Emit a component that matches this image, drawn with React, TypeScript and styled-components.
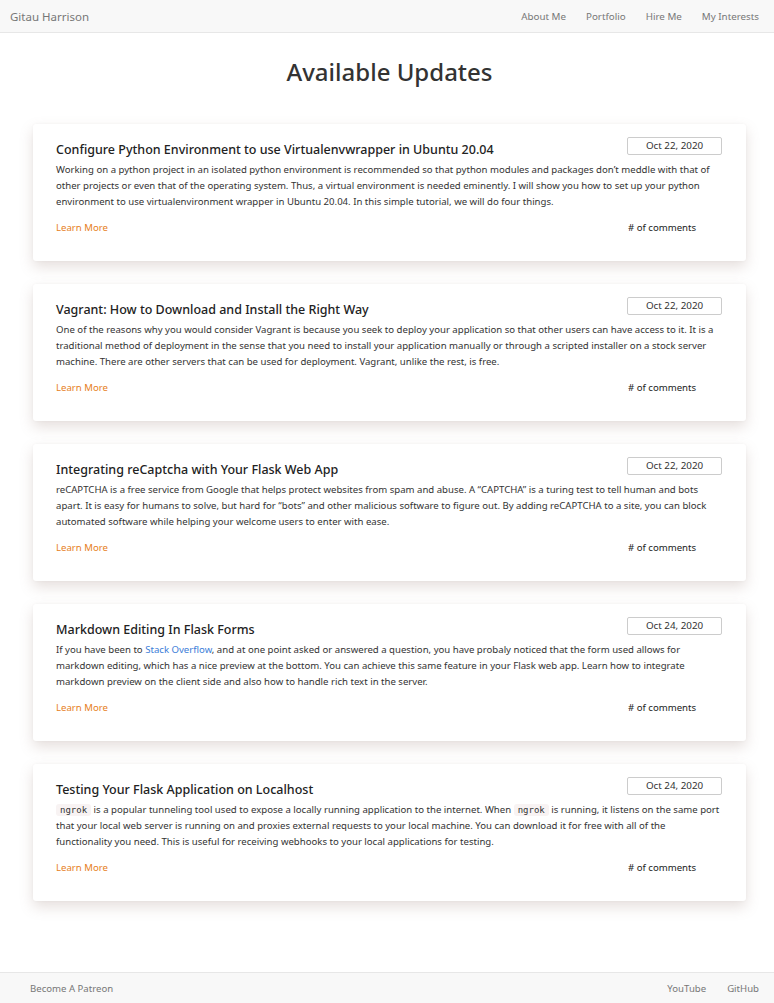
import React from "react";
import styled, { createGlobalStyle } from "styled-components";

const Global = createGlobalStyle`
  html, body { margin: 0; padding: 0; background: #fff; }
  body { font-family: "Noto Sans", "Open Sans", sans-serif; color: #333; }
  * { box-sizing: border-box; }
`;

const Page = styled.div`
  min-height: 100vh;
  display: flex;
  flex-direction: column;
`;

const NavBar = styled.header`
  height: 33px;
  background: #f8f8f8;
  border-bottom: 1px solid #e7e7e7;
  display: flex;
  align-items: center;
  justify-content: space-between;
  padding: 0 15px 0 10px;
`;

const Brand = styled.a`
  font-size: 11.5px;
  color: #777;
  text-decoration: none;
`;

const NavLinks = styled.nav`
  display: flex;
  gap: 20px;
`;

const NavLink = styled.a`
  font-size: 9.8px;
  color: #777;
  text-decoration: none;
`;

const Main = styled.main`
  flex: 1;
  padding: 0 28px 70px 33px;
`;

const Heading = styled.h1`
  margin: 24px 0 37px;
  text-align: center;
  font-size: 24px;
  font-weight: 500;
  line-height: 30px;
  color: #333;
`;

const CardList = styled.div`
  display: flex;
  flex-direction: column;
  gap: 23px;
`;

const Card = styled.article`
  background: #fff;
  border-radius: 3px;
  padding: 13px 24px 25px 23px;
  box-shadow: 0 6px 14px rgba(140, 110, 100, 0.22), 0 0 3px rgba(0, 0, 0, 0.04);
`;

const CardHeader = styled.div`
  display: flex;
  justify-content: space-between;
  align-items: flex-start;
`;

const Title = styled.h2`
  margin: 0;
  padding-top: 5px;
  font-size: 12.5px;
  font-weight: 500;
  line-height: 16px;
  color: #222;
`;

const DateBox = styled.div`
  width: 95px;
  height: 18px;
  flex-shrink: 0;
  border: 1px solid #ccc;
  border-radius: 2px;
  font-size: 9.8px;
  line-height: 16px;
  text-align: center;
  color: #333;
`;

const Body = styled.p`
  margin: 4px 0 0;
  font-size: 9.6px;
  line-height: 16px;
  color: #333;
`;

const Link = styled.a`
  color: #3b7dd8;
  text-decoration: none;
`;

const Code = styled.code`
  font-family: "DejaVu Sans Mono", "Liberation Mono", monospace;
  font-size: 9px;
  line-height: 12px;
  background: #f8f3f3;
  border-radius: 3px;
  padding: 1px 4px;
  color: #333;
`;

const CardFooter = styled.div`
  margin-top: 10px;
  display: flex;
  justify-content: space-between;
  font-size: 9.6px;
  line-height: 16px;
`;

const LearnMore = styled.a`
  color: #e67e22;
  text-decoration: none;
`;

const Comments = styled.span`
  width: 95px;
  padding-left: 1px;
  color: #222;
`;

const Footer = styled.footer`
  height: 31px;
  background: #f8f8f8;
  border-top: 1px solid #e7e7e7;
  display: flex;
  align-items: center;
  justify-content: space-between;
  padding: 0 15px 0 30px;
`;

const FooterLinks = styled.div`
  display: flex;
  gap: 21px;
`;

const FooterLink = styled.a`
  font-size: 9.6px;
  color: #777;
  text-decoration: none;
`;

type Post = { title: string; date: string; body: React.ReactNode };

const posts: Post[] = [
  {
    title: "Configure Python Environment to use Virtualenvwrapper in Ubuntu 20.04",
    date: "Oct 22, 2020",
    body: "Working on a python project in an isolated python environment is recommended so that python modules and packages don’t meddle with that of other projects or even that of the operating system. Thus, a virtual environment is needed eminently. I will show you how to set up your python environment to use virtualenvironment wrapper in Ubuntu 20.04. In this simple tutorial, we will do four things.",
  },
  {
    title: "Vagrant: How to Download and Install the Right Way",
    date: "Oct 22, 2020",
    body: "One of the reasons why you would consider Vagrant is because you seek to deploy your application so that other users can have access to it. It is a traditional method of deployment in the sense that you need to install your application manually or through a scripted installer on a stock server machine. There are other servers that can be used for deployment. Vagrant, unlike the rest, is free.",
  },
  {
    title: "Integrating reCaptcha with Your Flask Web App",
    date: "Oct 22, 2020",
    body: "reCAPTCHA is a free service from Google that helps protect websites from spam and abuse. A “CAPTCHA” is a turing test to tell human and bots apart. It is easy for humans to solve, but hard for “bots” and other malicious software to figure out. By adding reCAPTCHA to a site, you can block automated software while helping your welcome users to enter with ease.",
  },
  {
    title: "Markdown Editing In Flask Forms",
    date: "Oct 24, 2020",
    body: (
      <>
        If you have been to <Link href="#">Stack Overflow</Link>, and at one point asked or answered a question, you have probaly noticed that the form used allows for markdown editing, which has a nice preview at the bottom. You can achieve this same feature in your Flask web app. Learn how to integrate markdown preview on the client side and also how to handle rich text in the server.
      </>
    ),
  },
  {
    title: "Testing Your Flask Application on Localhost",
    date: "Oct 24, 2020",
    body: (
      <>
        <Code>ngrok</Code> is a popular tunneling tool used to expose a locally running application to the internet. When <Code>ngrok</Code> is running, it listens on the same port that your local web server is running on and proxies external requests to your local machine. You can download it for free with all of the functionality you need. This is useful for receiving webhooks to your local applications for testing.
      </>
    ),
  },
];

export default function App() {
  return (
    <Page>
      <Global />
      <NavBar>
        <Brand href="#">Gitau Harrison</Brand>
        <NavLinks>
          <NavLink href="#">About Me</NavLink>
          <NavLink href="#">Portfolio</NavLink>
          <NavLink href="#">Hire Me</NavLink>
          <NavLink href="#">My Interests</NavLink>
        </NavLinks>
      </NavBar>
      <Main>
        <Heading>Available Updates</Heading>
        <CardList>
          {posts.map((p) => (
            <Card key={p.title}>
              <CardHeader>
                <Title>{p.title}</Title>
                <DateBox>{p.date}</DateBox>
              </CardHeader>
              <Body>{p.body}</Body>
              <CardFooter>
                <LearnMore href="#">Learn More</LearnMore>
                <Comments># of comments</Comments>
              </CardFooter>
            </Card>
          ))}
        </CardList>
      </Main>
      <Footer>
        <FooterLink href="#">Become A Patreon</FooterLink>
        <FooterLinks>
          <FooterLink href="#">YouTube</FooterLink>
          <FooterLink href="#">GitHub</FooterLink>
        </FooterLinks>
      </Footer>
    </Page>
  );
}
